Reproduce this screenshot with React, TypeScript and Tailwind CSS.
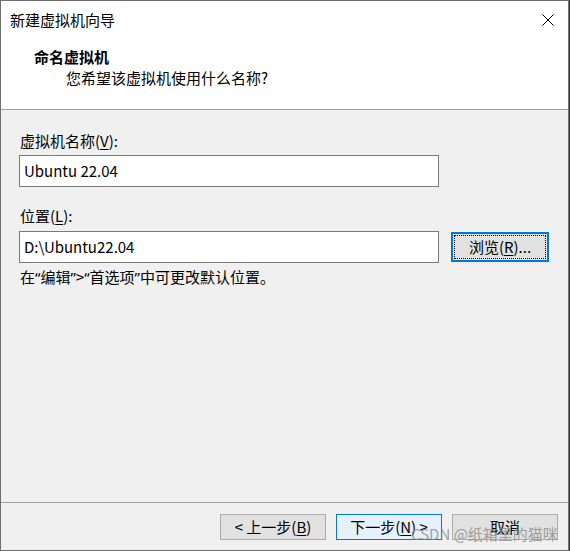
import React from "react";

const font = { fontFamily: '"Microsoft YaHei UI", "Noto Sans CJK SC", "Noto Sans", sans-serif' };

function Key({ k }: { k: string }) {
  return <span className="underline underline-offset-2 decoration-1">{k}</span>;
}

// narrow latin-style quote marks, as Windows draws them
function Q({ c }: { c: string }) {
  return <span className="font-['Noto_Sans',sans-serif]">{c}</span>;
}

function Btn({ children, primary = false }: { children: React.ReactNode; primary?: boolean }) {
  return (
    <div
      className={`w-[106px] h-[26px] flex items-center justify-center text-[15px] leading-[20px] text-black border ${
        primary ? "border-[#0078d7] bg-[#e5f1fb]" : "border-[#adadad] bg-[#e1e1e1]"
      }`}
    >
      {children}
    </div>
  );
}

export default function App() {
  return (
    <div className="w-[570px] h-[551px] bg-[#3c3c3c] relative" style={font}>
      <div className="w-[569px] h-[551px] border border-[#6e6e6e] flex flex-col bg-[#f0f0f0]">
        {/* title bar */}
        <div className="h-[37px] bg-white flex items-center justify-between pl-[9px] pr-[14px]">
          <span className="text-[15px] leading-[20px] text-black">新建虚拟机向导</span>
          <svg width="12" height="12" viewBox="0 0 12 12">
            <path d="M0.5 0.5 L11.5 11.5 M11.5 0.5 L0.5 11.5" stroke="#000" strokeWidth="1" />
          </svg>
        </div>

        {/* header */}
        <div className="h-[72px] bg-white border-b border-[#a0a0a0] pt-[9px]">
          <div className="pl-[33px] text-[15px] leading-[20px] font-bold text-black">命名虚拟机</div>
          <div className="pl-[65px] mt-[1px] text-[15px] leading-[20px] text-black">您希望该虚拟机使用什么名称?</div>
        </div>

        {/* body */}
        <div className="flex-1 px-[18px] pt-[21px] text-[15px] leading-[20px] text-black">
          <div className="pl-[1px]">
            虚拟机名称(<Key k="V" />):
          </div>
          <div className="mt-[4px] w-[420px] h-[32px] border border-[#7a7a7a] bg-white flex items-center px-[4px]">
            Ubuntu 22.04
          </div>

          <div className="mt-[19px] pl-[1px]">
            位置(<Key k="L" />):
          </div>
          <div className="mt-[5px] flex items-center gap-[12px]">
            <div className="w-[420px] h-[32px] border border-[#7a7a7a] bg-white flex items-center px-[4px]">
              D:\Ubuntu22.04
            </div>
            <div className="w-[98px] h-[30px] border-2 border-[#0078d7] bg-[#e1e1e1] p-[1px]">
              <div className="w-full h-full border border-dotted border-black flex items-center justify-center">
                浏览(<Key k="R" />)...
              </div>
            </div>
          </div>

          <div className="mt-[4px] pl-[1px]">
            在<Q c="“" />编辑<Q c="”" />&gt;<Q c="“" />首选项<Q c="”" />中可更改默认位置。
          </div>
        </div>

        {/* footer */}
        <div className="h-[48px] border-t border-[#a0a0a0] pt-[11px] pr-[10px] flex justify-end gap-[10px]">
          <Btn>
            &lt; 上一步(<Key k="B" />)
          </Btn>
          <Btn primary>
            下一步(<Key k="N" />) &gt;
          </Btn>
          <Btn>取消</Btn>
        </div>
      </div>

      {/* watermark */}
      <div className="absolute left-[411px] top-[524px] text-[15px] leading-[20px] text-[#8a8a8a]/80 pointer-events-none whitespace-nowrap">
        CSDN @纸箱里的猫咪
      </div>
    </div>
  );
}
